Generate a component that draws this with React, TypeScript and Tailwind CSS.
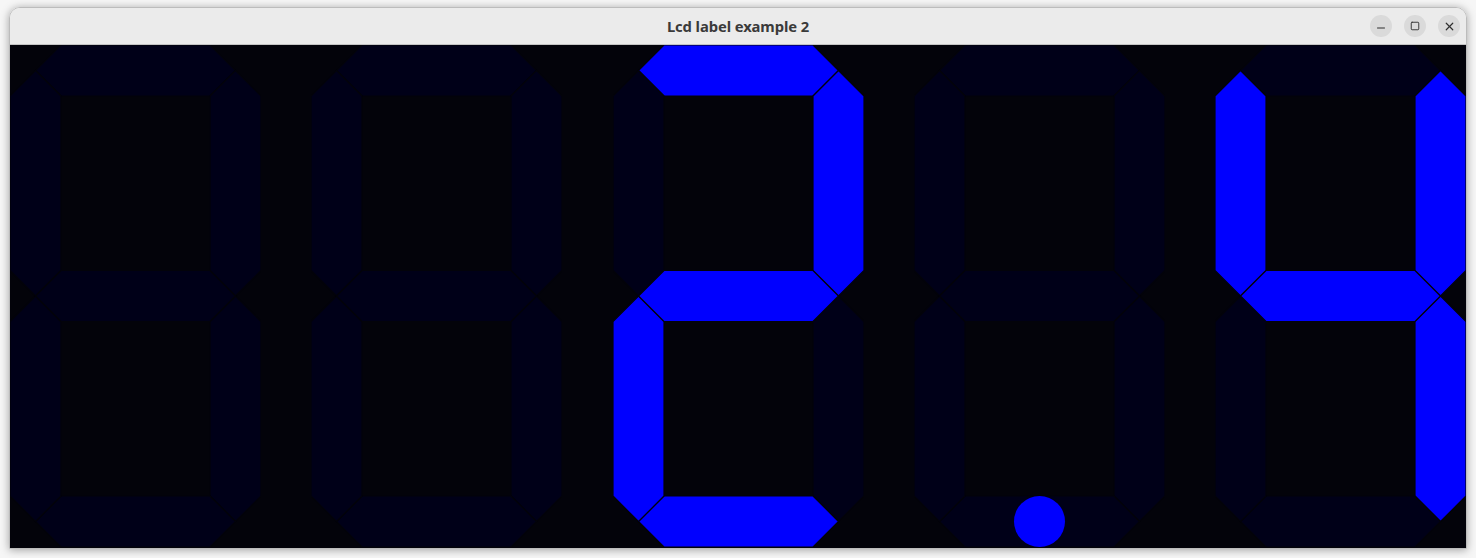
import { X, Minus, Square } from 'lucide-react'

// segment geometry for one digit cell
const W = 251
const H = 502
const T = 51
const h = T / 2
const M = H / 2

type Seg = 'a' | 'b' | 'c' | 'd' | 'e' | 'f' | 'g'

const SEGMENTS: Record<Seg, number[][]> = {
  a: [[h, h], [T, 0], [W - T, 0], [W - h, h], [W - T, T], [T, T]],
  b: [[W - h, h], [W, T], [W, M - h], [W - h, M], [W - T, M - h], [W - T, T]],
  c: [[W - h, M], [W, M + h], [W, H - T], [W - h, H - h], [W - T, H - T], [W - T, M + h]],
  d: [[h, H - h], [T, H - T], [W - T, H - T], [W - h, H - h], [W - T, H], [T, H]],
  e: [[h, M], [T, M + h], [T, H - T], [h, H - h], [0, H - T], [0, M + h]],
  f: [[h, h], [T, T], [T, M - h], [h, M], [0, M - h], [0, T]],
  g: [[h, M], [T, M - h], [W - T, M - h], [W - h, M], [W - T, M + h], [T, M + h]],
}

const ALL: Seg[] = ['a', 'b', 'c', 'd', 'e', 'f', 'g']

interface DigitProps {
  lit: Seg[]
  dot?: boolean
}

const Digit = ({ lit, dot }: DigitProps) => (
  <svg width={W} height={H} viewBox={`0 0 ${W} ${H}`} className="block shrink-0">
    {ALL.map((s) => (
      <polygon
        key={s}
        points={SEGMENTS[s].map((p) => p.join(',')).join(' ')}
        fill={lit.includes(s) ? '#0000ff' : '#000018'}
        stroke="#03030a"
        strokeWidth={1.2}
      />
    ))}
    {dot && <circle cx={W / 2} cy={H - h} r={25.5} fill="#0000ff" />}
  </svg>
)

const App = () => {
  return (
    <div className="w-[1476px] h-[558px] bg-[#f6f6f6] pt-[7px] px-[9px] overflow-hidden">
      <div className="border border-[#bcbcbc] rounded-t-[11px] overflow-hidden shadow-[0_1px_9px_rgba(0,0,0,0.35)]">
        {/* Title bar */}
        <div className="relative h-[37px] bg-[#ebebeb] border-b border-[#c4c4c4] flex items-center justify-center">
          <span className="font-['Noto_Sans',sans-serif] font-bold text-[14.8px] text-[#3a3a3a] tracking-[-0.1px]">
            Lcd label example 2
          </span>
          <div className="absolute right-[6px] top-[7px] flex gap-[12px]">
            <div className="w-[22px] h-[22px] rounded-full bg-[#dadada] flex items-center justify-center">
              <Minus size={12} strokeWidth={2} className="text-[#2f2f2f] translate-y-[2px]" />
            </div>
            <div className="w-[22px] h-[22px] rounded-full bg-[#dadada] flex items-center justify-center">
              <Square size={10} strokeWidth={2.2} className="text-[#2f2f2f]" />
            </div>
            <div className="w-[22px] h-[22px] rounded-full bg-[#dadada] flex items-center justify-center">
              <X size={13} strokeWidth={2.2} className="text-[#2f2f2f]" />
            </div>
          </div>
        </div>

        {/* LCD area */}
        <div className="h-[503px] bg-[#03030a] flex justify-between items-start">
          <Digit lit={[]} />
          <Digit lit={[]} />
          <Digit lit={['a', 'b', 'g', 'e', 'd']} />
          <Digit lit={[]} dot />
          <Digit lit={['f', 'b', 'g', 'c']} />
        </div>
      </div>
    </div>
  )
}

export default App
